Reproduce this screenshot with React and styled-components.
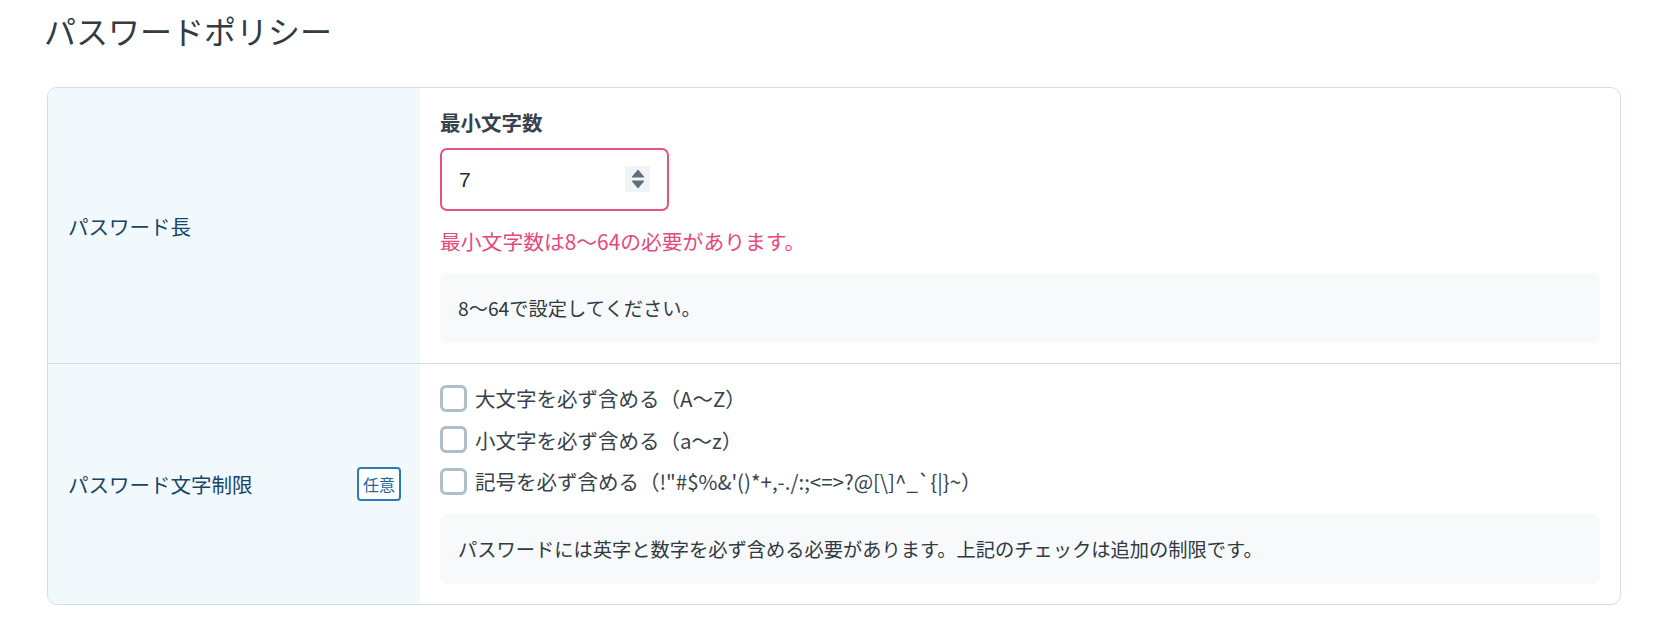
import React from "react";
import styled, { createGlobalStyle } from "styled-components";

const GlobalStyle = createGlobalStyle`
  html, body { margin: 0; padding: 0; background: #ffffff; }
  body { font-family: "Noto Sans CJK JP", "Noto Sans", sans-serif; color: #333d45; }
  * { box-sizing: border-box; }
`;

const Page = styled.div`
  padding: 8px 45px 34px 47px;
`;

const Title = styled.h1`
  margin: 0 0 35px -3px;
  font-size: 32px;
  line-height: 44px;
  font-weight: 400;
  color: #323c44;
`;

const Card = styled.div`
  border: 1px solid #d3dde4;
  border-radius: 10px;
  overflow: hidden;
`;

const Row = styled.div`
  display: grid;
  grid-template-columns: 372px 1fr;
  & + & { border-top: 1px solid #d3dde4; }
`;

const Head = styled.div`
  background: #f2f9fd;
  display: flex;
  align-items: center;
  justify-content: space-between;
  padding: 0 19px 0 20px;
`;

const HeadLabel = styled.span`
  font-size: 20.5px;
  color: #17456a;
`;

const Badge = styled.span`
  display: inline-flex;
  align-items: center;
  justify-content: center;
  width: 44px;
  height: 34px;
  border: 2px solid #2a7cbb;
  border-radius: 4px;
  font-size: 16px;
  color: #23689c;
  background: #ffffff;
`;

const Body = styled.div`
  padding: 20px;
  display: flex;
  flex-direction: column;
  align-items: flex-start;
`;

const FieldLabel = styled.div`
  font-size: 20.5px;
  line-height: 29px;
  font-weight: 700;
  color: #37434c;
`;

const InputWrap = styled.div`
  position: relative;
  margin-top: 11px;
  width: 229px;
  height: 63px;
  border: 2px solid #e8527f;
  border-radius: 7px;
  display: flex;
  align-items: center;
  padding-left: 17px;
`;

const InputValue = styled.input`
  border: none;
  outline: none;
  background: transparent;
  font-family: "Liberation Sans", Arial, sans-serif;
  font-size: 21px;
  color: #222a30;
  width: 150px;
  padding: 0;
`;

const Spinner = styled.span`
  position: absolute;
  right: 17px;
  top: 16px;
  width: 25px;
  height: 26px;
  background: #f1f4f6;
  display: flex;
  align-items: center;
  justify-content: center;
`;

const ErrorText = styled.div`
  margin-top: 16px;
  font-size: 20.8px;
  line-height: 28px;
  color: #e5497c;
`;

const Help = styled.div`
  align-self: stretch;
  margin-top: ${(p) => p.$mt || 18}px;
  height: 70px;
  background: #f7f9fa;
  border-radius: 7px;
  display: flex;
  align-items: center;
  padding: 0 18px;
  font-size: 19.25px;
  color: #2f3a42;
`;

const CheckList = styled.div`
  display: flex;
  flex-direction: column;
  gap: 13.5px;
`;

const CheckItem = styled.label`
  display: flex;
  align-items: center;
  height: 28px;
  gap: 8px;
  font-size: 20.5px;
  color: #37434c;
  cursor: pointer;
`;

const Box = styled.span`
  width: 27px;
  height: 27px;
  border: 3px solid #aebfca;
  border-radius: 6px;
  background: #ffffff;
  flex: none;
`;

export default function App() {
  return (
    <>
      <GlobalStyle />
      <Page>
        <Title>パスワードポリシー</Title>
        <Card>
          <Row>
            <Head>
              <HeadLabel>パスワード長</HeadLabel>
            </Head>
            <Body>
              <FieldLabel>最小文字数</FieldLabel>
              <InputWrap>
                <InputValue defaultValue="7" />
                <Spinner>
                  <svg width="14" height="22" viewBox="0 0 14 22">
                    <path d="M7 2.5 L12.5 9 L1.5 9 Z" fill="#5e707c" stroke="#5e707c" strokeWidth="1.2" strokeLinejoin="round" />
                    <path d="M7 19.5 L12.5 13 L1.5 13 Z" fill="#5e707c" stroke="#5e707c" strokeWidth="1.2" strokeLinejoin="round" />
                  </svg>
                </Spinner>
              </InputWrap>
              <ErrorText>最小文字数は8〜64の必要があります。</ErrorText>
              <Help>8〜64で設定してください。</Help>
            </Body>
          </Row>
          <Row>
            <Head>
              <HeadLabel>パスワード文字制限</HeadLabel>
              <Badge>任意</Badge>
            </Head>
            <Body>
              <CheckList>
                <CheckItem><Box />大文字を必ず含める（A〜Z）</CheckItem>
                <CheckItem><Box />小文字を必ず含める（a〜z）</CheckItem>
                <CheckItem><Box />記号を必ず含める（!"#$%&amp;'()*+,-./:;&lt;=&gt;?@[\]^_`{"{|}"}~）</CheckItem>
              </CheckList>
              <Help $mt={19}>パスワードには英字と数字を必ず含める必要があります。上記のチェックは追加の制限です。</Help>
            </Body>
          </Row>
        </Card>
      </Page>
    </>
  );
}
